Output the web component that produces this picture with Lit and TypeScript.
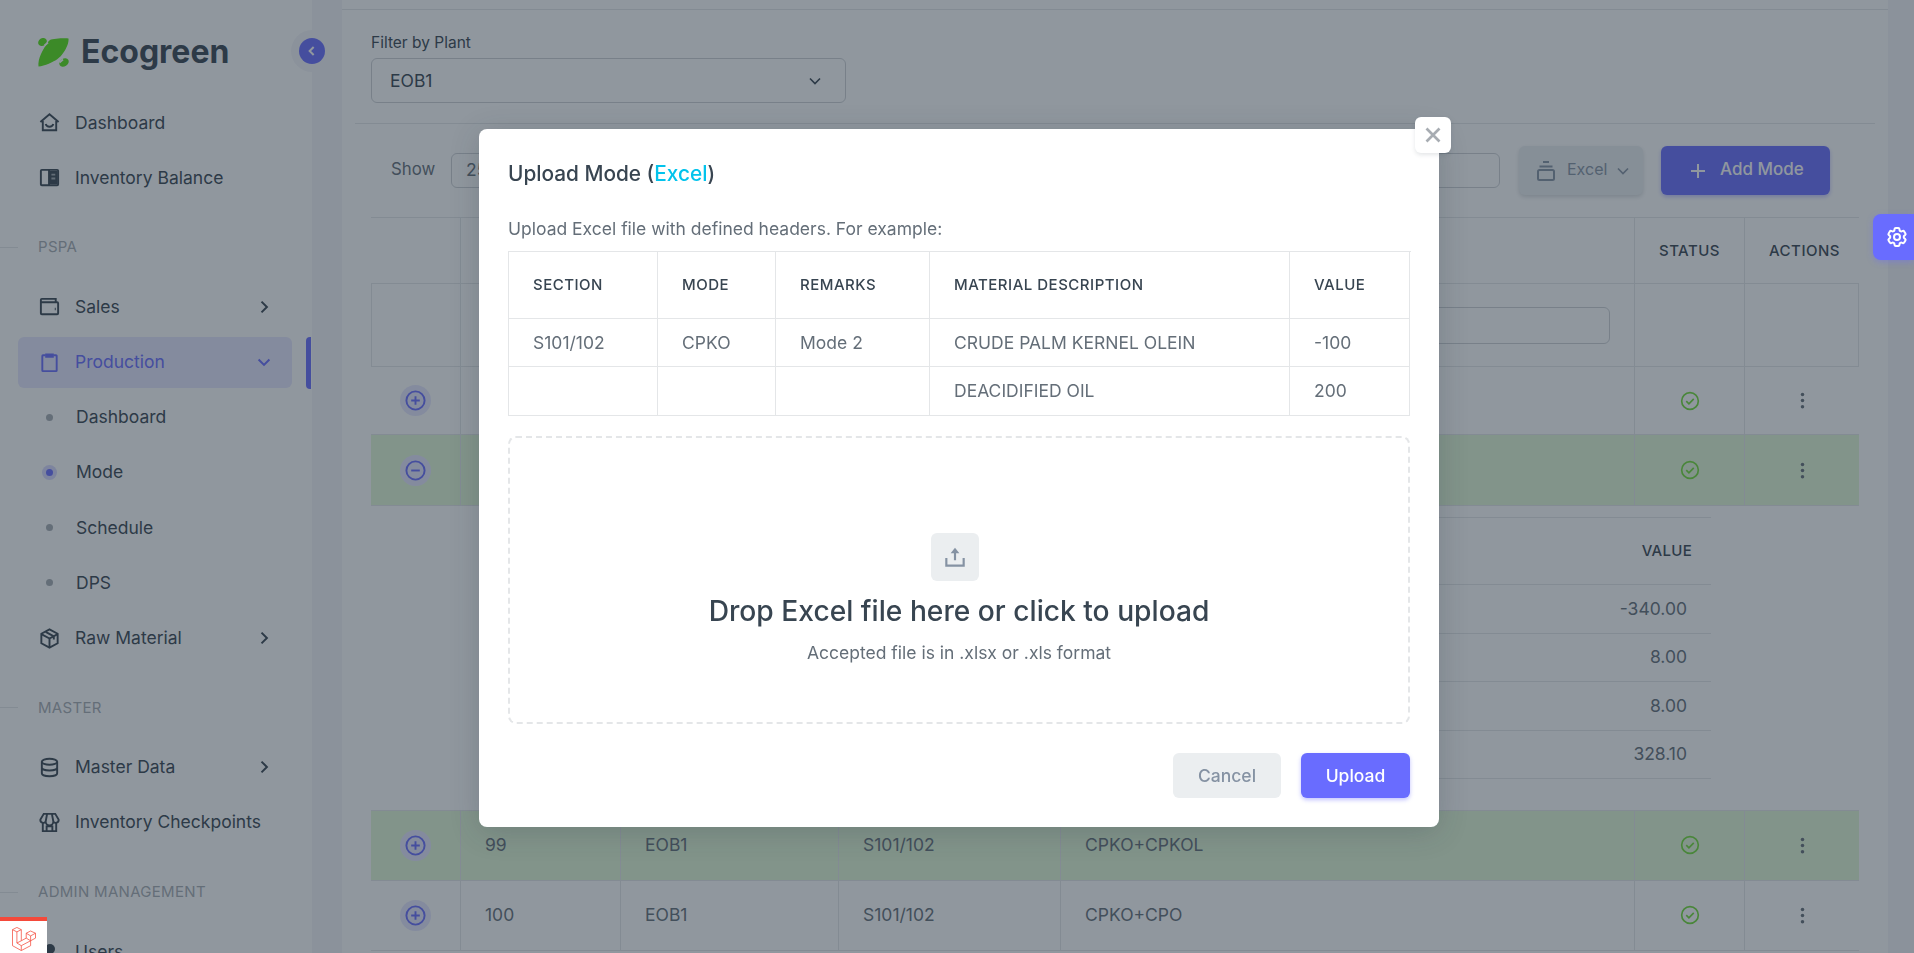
import { LitElement, html, css, svg, nothing } from 'lit';
import { customElement } from 'lit/decorators.js';

const ICONS: Record<string, unknown> = {
  home: svg`<path d="M5 10.5V20h14v-9.5M2.5 11.5 12 3.5l9.5 8M8 13.5a4.2 4.2 0 0 0 8 0"/>`,
  layout: svg`<rect x="3" y="4" width="18" height="16" rx="1"/><path d="M11.5 4v16" /><path d="M11.5 5h9v14h-9z" fill="currentColor" stroke="none"/><path d="M14 9h4M14 13h4" stroke="#fff" stroke-opacity=".55"/>`,
  wallet: svg`<path d="M3 7.5V19a1 1 0 0 0 1 1h16a1 1 0 0 0 1-1V8.5a1 1 0 0 0-1-1H3Zm0 0V5a1 1 0 0 1 1-1h14.5v3.5"/><path d="M17.5 14.5h1" stroke-width="2.6"/>`,
  clipboard: svg`<path d="M8 4.5H5.2a.7.7 0 0 0-.7.7v15.1c0 .4.3.7.7.7h13.6c.4 0 .7-.3.7-.7V5.2a.7.7 0 0 0-.7-.7H16"/><path d="M8.5 3.5h7v2.5h-7z" fill="currentColor"/>`,
  box: svg`<path d="M12 2.5 20.5 7v10L12 21.5 3.5 17V7L12 2.5Z"/><path d="M3.5 7.5 12 12l8.5-4.5M12 12v9.5M8 5l8.5 4.7v3.3"/>`,
  database: svg`<ellipse cx="12" cy="6" rx="8" ry="3.2"/><path d="M4 6v12c0 1.8 3.6 3.2 8 3.2s8-1.4 8-3.2V6M4 12c0 1.8 3.6 3.2 8 3.2s8-1.4 8-3.2"/>`,
  store: svg`<path d="M5 13v8h14v-8M9 21v-5h6v5M6 3h12l3.5 6a3 3 0 0 1-5.5 2 3.6 3.6 0 0 1-8 0 3 3 0 0 1-5.5-2L6 3ZM9.5 3 8 11M14.5 3l1.5 8"/>`,
};

const icon = (name: string) => html`<svg class="ico" viewBox="0 0 24 24">${ICONS[name]}</svg>`;

const chevronRight = html`<svg class="chev" viewBox="0 0 24 24"><path d="m9 5.5 6.5 6.5L9 18.5"/></svg>`;
const chevronDown = html`<svg class="chev" viewBox="0 0 24 24"><path d="m5.5 9 6.5 6.5L18.5 9"/></svg>`;
const selectChevron = html`<svg class="sel-chev" viewBox="0 0 24 24"><path d="m6 9 6 6 6-6"/></svg>`;

const plusBtn = html`<span class="round"><svg viewBox="0 0 24 24"><circle cx="12" cy="12" r="9.5"/><path d="M12 7.5v9M7.5 12h9"/></svg></span>`;
const minusBtn = html`<span class="round"><svg viewBox="0 0 24 24"><circle cx="12" cy="12" r="9.5"/><path d="M7.5 12h9"/></svg></span>`;
const check = html`<svg class="check" viewBox="0 0 24 24"><circle cx="12" cy="12" r="10"/><path d="m7.5 12.2 3.2 3.2 5.8-6"/></svg>`;
const dots = html`<svg class="dots" viewBox="0 0 24 24"><circle cx="12" cy="5" r="2"/><circle cx="12" cy="12" r="2"/><circle cx="12" cy="19" r="2"/></svg>`;

type NavItem =
  | { kind: 'head'; label: string }
  | { kind: 'link'; label: string; icon: string; arrow?: boolean; open?: boolean }
  | { kind: 'sub'; label: string; active?: boolean };

const NAV: NavItem[] = [
  { kind: 'link', label: 'Dashboard', icon: 'home' },
  { kind: 'link', label: 'Inventory Balance', icon: 'layout' },
  { kind: 'head', label: 'PSPA' },
  { kind: 'link', label: 'Sales', icon: 'wallet', arrow: true },
  { kind: 'link', label: 'Production', icon: 'clipboard', open: true },
  { kind: 'sub', label: 'Dashboard' },
  { kind: 'sub', label: 'Mode', active: true },
  { kind: 'sub', label: 'Schedule' },
  { kind: 'sub', label: 'DPS' },
  { kind: 'link', label: 'Raw Material', icon: 'box', arrow: true },
  { kind: 'head', label: 'MASTER' },
  { kind: 'link', label: 'Master Data', icon: 'database', arrow: true },
  { kind: 'link', label: 'Inventory Checkpoints', icon: 'store' },
  { kind: 'head', label: 'ADMIN MANAGEMENT' },
];

@customElement('app-root')
export class AppRoot extends LitElement {
  static styles = css`
    :host {
      display: flex;
      width: 1914px;
      height: 953px;
      overflow: hidden;
      background: #f5f5f9;
      color: #646e78;
      font-family: Inter, "Liberation Sans", sans-serif;
      font-size: 17.5px;
      line-height: 20px;
    }
    svg { display: block; }

    /* sidebar */
    .sidebar {
      position: relative;
      flex: 0 0 312px;
      background: #fff;
    }
    .brand {
      display: flex;
      align-items: center;
      gap: 12px;
      height: 97px;
      padding: 7px 0 0 38px;
      box-sizing: border-box;
      color: #384551;
      font-size: 32px;
      font-weight: 700;
    }
    .toggle {
      position: absolute;
      left: 291px;
      top: 30px;
      width: 42px;
      height: 42px;
      border-radius: 50%;
      background: #f5f5f9;
      clip-path: inset(0 21px 0 0);
    }
    .toggle-dot {
      position: absolute;
      left: 299px;
      top: 38px;
      width: 26px;
      height: 26px;
      border-radius: 50%;
      background: #696cff;
      display: flex;
      align-items: center;
      justify-content: center;
    }
    .toggle-dot svg { width: 16px; height: 16px; fill: none; stroke: #fff; stroke-width: 3; }
    .nav { display: flex; flex-direction: column; }
    .link {
      position: relative;
      display: flex;
      align-items: center;
      flex: none;
      height: 51px;
      margin: 0 20px 4.2px 18px;
      padding: 0 18px 0 20px;
      border-radius: 6px;
      color: #384551;
    }
    .link.open { background: #e7e7ff; color: #696cff; }
    .link.open::after {
      content: "";
      position: absolute;
      left: 288px;
      top: 0;
      width: 5px;
      height: 52px;
      background: #696cff;
      border-radius: 4px 0 0 4px;
    }
    .ico {
      flex: none;
      width: 23px;
      height: 23px;
      margin-right: 14px;
      fill: none;
      stroke: currentColor;
      stroke-width: 2;
    }
    .chev {
      width: 20px;
      height: 20px;
      margin-left: auto;
      fill: none;
      stroke: currentColor;
      stroke-width: 2.4;
    }
    .dot {
      flex: none;
      width: 7px;
      height: 7px;
      margin: 0 23px 0 8px;
      border-radius: 50%;
      background: #a7acb2;
    }
    .sub.active .dot {
      background: #696cff;
      box-shadow: 0 0 0 4px #d9d9ff;
    }
    .head {
      display: flex;
      align-items: center;
      flex: none;
      height: 20px;
      margin: 30px 0 24px;
      color: #a7acb2;
      font-size: 15px;
      letter-spacing: .3px;
    }
    .head::before {
      content: "";
      width: 18px;
      height: 1px;
      margin-right: 20px;
      background: #e4e6e8;
    }
    .user-dot {
      flex: none;
      width: 10px;
      height: 10px;
      margin: -6px 20px 0 7px;
      border-radius: 50%;
      background: #384551;
    }

    /* main */
    .main {
      flex: 0 0 1546px;
      margin-left: 30px;
      background: #fff;
      height: 953px;
      overflow: hidden;
    }
    .edge { height: 9px; border-bottom: 1px solid #e4e6e8; }
    .filter { padding: 23px 0 20px 29px; height: 70px; }
    .filter label { display: block; height: 25px; color: #384551; font-size: 15.5px; }
    .select {
      display: flex;
      align-items: center;
      justify-content: space-between;
      width: 475px;
      height: 45px;
      padding: 0 20px 0 18px;
      box-sizing: border-box;
      border: 1px solid #ced1d5;
      border-radius: 6px;
      color: #384551;
    }
    .sel-chev { width: 20px; height: 20px; fill: none; stroke: #384551; stroke-width: 2; }
    .rule { height: 1px; margin: 0 13px; background: #e4e6e8; }
    .toolbar {
      display: flex;
      align-items: center;
      height: 93px;
      padding-left: 49px;
      box-sizing: border-box;
    }
    .show { width: 60px; padding-bottom: 3px; font-size: 16.8px; }
    .mini {
      width: 120px;
      height: 35px;
      border: 1px solid #ced1d5;
      border-radius: 6px;
      box-sizing: border-box;
      padding: 6px 14px;
    }
    .search {
      width: 900px;
      height: 35px;
      margin-left: auto;
      border: 1px solid #ced1d5;
      border-radius: 6px;
      box-sizing: border-box;
    }
    .btn-excel {
      display: flex;
      align-items: center;
      width: 124px;
      height: 49px;
      margin-left: 19px;
      padding-left: 17px;
      box-sizing: border-box;
      border-radius: 6px;
      background: #ebeef0;
      box-shadow: 0 2px 4px rgba(34,48,62,.18);
      color: #8592a3;
      font-size: 16px;
    }
    .btn-excel .label, .btn-add .label { padding-bottom: 3px; }
    .btn-excel svg.stack { width: 20px; height: 22px; margin-right: 11px; fill: none; stroke: currentColor; stroke-width: 2; }
    .btn-excel .sel-chev { stroke: currentColor; margin-left: 6px; width: 20px; height: 20px; }
    .btn-add {
      display: flex;
      align-items: center;
      width: 169px;
      height: 49px;
      margin: 0 58px 0 18px;
      padding-left: 28px;
      box-sizing: border-box;
      border-radius: 6px;
      background: #696cff;
      box-shadow: 0 2px 4px rgba(105,108,255,.4);
      color: #fff;
      font-weight: 500;
      font-size: 17px;
    }
    .btn-add svg { width: 18px; height: 18px; margin-right: 13px; fill: none; stroke: currentColor; stroke-width: 2; }

    .table {
      display: grid;
      grid-template-columns: 90px 160px 218px 222px 574px 110px 114px;
      margin-left: 29px;
      width: 1488px;
    }
    .row { display: contents; }
    .cell {
      display: flex;
      align-items: center;
      padding-left: 24px;
      border-right: 1px solid #e4e6e8;
      border-bottom: 1px solid #e4e6e8;
      box-sizing: border-box;
    }
    .cell:last-child { border-right: 0; }
    .cell.c { justify-content: center; padding-left: 0; }
    .th {
      height: 67px;
      border-top: 1px solid #e4e6e8;
      color: #384551;
      font-size: 15px;
      font-weight: 500;
      letter-spacing: .5px;
    }
    .cell.c.th:last-child { padding-left: 5px; }
    .fl { height: 83px; }
    .fl.first { border-left: 1px solid #e4e6e8; }
    .fl:last-child { border-right: 1px solid #e4e6e8; }
    .fl .inp {
      width: 100%;
      height: 35px;
      margin-right: 24px;
      border: 1px solid #ced1d5;
      border-radius: 6px;
    }
    .tall { height: 68px; }
    .h70 { height: 70px; }
    .h71 { height: 71px; }
    .green { background: #e3f8d7; }
    .round {
      display: flex;
      align-items: center;
      justify-content: center;
      width: 31px;
      height: 31px;
      border-radius: 50%;
      background: #e7e7ff;
    }
    .round svg { width: 23px; height: 23px; fill: none; stroke: #696cff; stroke-width: 2; }
    .check { width: 20px; height: 20px; fill: none; stroke: #71dd37; stroke-width: 2; }
    .dots { width: 21px; height: 21px; fill: #646e78; }
    .detail {
      grid-column: 1 / -1;
      height: 304.5px;
      padding: 11px 0 0;
      box-sizing: border-box;
      border-bottom: 1px solid #e4e6e8;
    }
    .nested {
      width: 1111px;
      margin-left: 229px;
      border-top: 1px solid #e4e6e8;
    }
    .nested div {
      display: flex;
      align-items: center;
      justify-content: flex-end;
      height: 48.5px;
      padding-right: 24px;
      box-sizing: border-box;
      border-bottom: 1px solid #e4e6e8;
    }
    .nested .nh { height: 67px; padding-right: 19px; color: #384551; font-size: 15px; font-weight: 500; letter-spacing: .3px; }

    /* modal */
    .backdrop {
      position: fixed;
      inset: 0;
      background: rgba(34,48,62,.5);
    }
    .modal {
      position: absolute;
      left: 479px;
      top: 129px;
      width: 960px;
      height: 698px;
      padding: 31px 29px 0;
      box-sizing: border-box;
      background: #fff;
      border-radius: 8px;
      box-shadow: 0 5px 30px rgba(34,48,62,.2);
    }
    .close {
      position: absolute;
      right: -12px;
      top: -12px;
      width: 36px;
      height: 36px;
      display: flex;
      align-items: center;
      justify-content: center;
      background: #fff;
      border-radius: 6px;
      box-shadow: 0 2px 4px rgba(34,48,62,.12);
    }
    .close svg { width: 20px; height: 20px; fill: none; stroke: #a7acb2; stroke-width: 2.7; }
    .title {
      height: 28px;
      color: #384551;
      font-size: 20.8px;
      font-weight: 500;
      line-height: 28px;
    }
    .title span { color: #03c3ec; }
    .hint { margin-top: 31px; height: 32px; line-height: 20px; }
    .ex {
      display: grid;
      grid-template-columns: 149px 118px 154px 360px 120px;
      width: 902px;
      border-top: 1px solid #e4e6e8;
      border-left: 1px solid #e4e6e8;
    }
    .ex > div {
      display: flex;
      align-items: center;
      padding-left: 24px;
      height: 48px;
      border-right: 1px solid #e4e6e8;
      border-bottom: 1px solid #e4e6e8;
      box-sizing: border-box;
    }
    .ex > div.eh { height: 67px; color: #384551; font-size: 15px; font-weight: 500; letter-spacing: .5px; }
    .ex > div.last { height: 49px; }
    .drop {
      display: flex;
      flex-direction: column;
      align-items: center;
      width: 902px;
      height: 288px;
      margin-top: 20px;
      padding-top: 95px;
      box-sizing: border-box;
      border: 2px dashed #e4e6e8;
      border-radius: 8px;
    }
    .drop-ico {
      display: flex;
      align-items: center;
      justify-content: center;
      width: 48px;
      height: 48px;
      margin-right: 9px;
      border-radius: 6px;
      background: #ebeef0;
    }
    .drop-ico svg { width: 26px; height: 26px; fill: none; stroke: #8592a3; stroke-width: 2; }
    .drop h3 {
      margin: 13px 0 0;
      height: 34px;
      color: #384551;
      font-size: 28.2px;
      font-weight: 500;
      line-height: 34px;
    }
    .drop p { margin: 15px 0 0; }
    .actions {
      display: flex;
      justify-content: flex-end;
      gap: 20px;
      margin-top: 29px;
    }
    .actions button {
      height: 45px;
      padding: 0;
      border: 0;
      border-radius: 6px;
      font: inherit;
      font-weight: 500;
    }
    .cancel { width: 108px; background: #ebeef0; color: #8592a3; }
    .upload { width: 109px; background: #696cff; color: #fff; box-shadow: 0 2px 4px rgba(105,108,255,.4); }

    .gear {
      position: fixed;
      right: 0;
      top: 214px;
      width: 41px;
      height: 46px;
      display: flex;
      align-items: center;
      padding-left: 12px;
      box-sizing: border-box;
      background: #696cff;
      border-radius: 8px 0 0 8px;
      box-shadow: 0 2px 6px rgba(105,108,255,.4);
    }
    .gear svg { width: 24px; height: 24px; fill: none; stroke: #fff; stroke-width: 2; }
    .debug {
      position: fixed;
      left: 0;
      bottom: 0;
      width: 47px;
      height: 36px;
      box-sizing: border-box;
      display: flex;
      justify-content: center;
      padding-top: 6px;
      background: #fff;
      border-top: 4px solid #f4493a;
    }
    .debug svg { width: 24px; height: 24px; fill: none; stroke: #f4493a; stroke-width: 1.6; stroke-linejoin: round; }
  `;

  private renderNav(item: NavItem) {
    if (item.kind === 'head') return html`<div class="head">${item.label}</div>`;
    if (item.kind === 'sub') {
      return html`<div class="link sub ${item.active ? 'active' : ''}"><span class="dot"></span>${item.label}</div>`;
    }
    return html`<div class="link ${item.open ? 'open' : ''}">
      ${icon(item.icon)}${item.label}
      ${item.arrow ? chevronRight : item.open ? chevronDown : nothing}
    </div>`;
  }

  private renderRow(first: unknown, cols: string[], cls: string) {
    return html`<div class="row">
      <div class="cell c ${cls}">${first}</div>
      ${cols.map((c) => html`<div class="cell ${cls}">${c}</div>`)}
      <div class="cell c ${cls}">${check}</div>
      <div class="cell c ${cls}">${dots}</div>
    </div>`;
  }

  render() {
    return html`
      <aside class="sidebar">
        <div class="brand">
          <svg width="31" height="29" viewBox="0 0 31 29" fill="#56e412">
            <path d="M12 2C15 .5 27 0 30.5.5c.5 4-2 10-5 14-2 3-3.500 4.500-6 6.500-4 3-13 7-19 7.500C0 25 1 20 3 16c2-4 3-6 4.500-8 1-1.500 2.500-4.500 4.500-6Z"/>
            <ellipse cx="4.500" cy="4" rx="4.500" ry="3.800" transform="rotate(-32 4.500 4)"/>
            <ellipse cx="26" cy="24.500" rx="5" ry="3.800" transform="rotate(-32 26 24.500)"/>
            <path d="M6.500 7.500 10 4.500M21.500 24.500l3.500-3" stroke="#fff" stroke-width="1.800" fill="none"/>
          </svg>
          Ecogreen
        </div>
        <span class="toggle"></span>
        <span class="toggle-dot"><svg viewBox="0 0 24 24"><path d="m14.5 6-6 6 6 6"/></svg></span>
        <nav class="nav">
          ${NAV.map((item) => this.renderNav(item))}
          <div class="link users"><span class="user-dot"></span>Users</div>
        </nav>
      </aside>

      <main class="main">
        <div class="edge"></div>
        <div class="filter">
          <label>Filter by Plant</label>
          <div class="select">EOB1 ${selectChevron}</div>
        </div>
        <div class="rule"></div>
        <div class="toolbar">
          <span class="show">Show</span>
          <span class="mini">25</span>
          <span class="search"></span>
          <span class="btn-excel">
            <svg class="stack" viewBox="0 0 20 22"><path d="M7 2h6M3.5 6.5h13"/><rect x="2" y="10" width="16" height="10" rx="1.5"/></svg>
            <span class="label">Excel</span> ${selectChevron}
          </span>
          <span class="btn-add">
            <svg viewBox="0 0 18 18"><path d="M9 2v14M2 9h14"/></svg><span class="label">Add Mode</span>
          </span>
        </div>

        <div class="table">
          <div class="row">
            <div class="cell th"></div><div class="cell th"></div><div class="cell th"></div>
            <div class="cell th"></div><div class="cell th"></div>
            <div class="cell c th">STATUS</div><div class="cell c th">ACTIONS</div>
          </div>
          <div class="row">
            <div class="cell fl first"></div><div class="cell fl"></div><div class="cell fl"></div>
            <div class="cell fl"></div><div class="cell fl"><span class="inp"></span></div>
            <div class="cell fl"></div><div class="cell fl"></div>
          </div>
          ${this.renderRow(plusBtn, ['', '', '', ''], 'tall')}
          ${this.renderRow(minusBtn, ['', '', '', ''], 'h71 green')}
          <div class="detail">
            <div class="nested">
              <div class="nh">VALUE</div>
              <div>-340.00</div>
              <div>8.00</div>
              <div>8.00</div>
              <div>328.10</div>
            </div>
          </div>
          ${this.renderRow(plusBtn, ['99', 'EOB1', 'S101/102', 'CPKO+CPKOL'], 'h70 green')}
          ${this.renderRow(plusBtn, ['100', 'EOB1', 'S101/102', 'CPKO+CPO'], 'h70')}
        </div>
      </main>

      <div class="backdrop">
        <section class="modal">
          <span class="close"><svg viewBox="0 0 20 20"><path d="m3.5 3.5 13 13M16.5 3.5l-13 13"/></svg></span>
          <div class="title">Upload Mode (<span>Excel</span>)</div>
          <div class="hint">Upload Excel file with defined headers. For example:</div>
          <div class="ex">
            <div class="eh">SECTION</div><div class="eh">MODE</div><div class="eh">REMARKS</div>
            <div class="eh">MATERIAL DESCRIPTION</div><div class="eh">VALUE</div>
            <div>S101/102</div><div>CPKO</div><div>Mode 2</div><div>CRUDE PALM KERNEL OLEIN</div><div>-100</div>
            <div class="last"></div><div class="last"></div><div class="last"></div><div class="last">DEACIDIFIED OIL</div><div class="last">200</div>
          </div>
          <div class="drop">
            <span class="drop-ico"><svg viewBox="0 0 24 24"><path d="M4 13v7h16v-7M12 15V5"/><path d="m12 3.5 4 5H8z" fill="#8592a3" stroke="none"/></svg></span>
            <h3>Drop Excel file here or click to upload</h3>
            <p>Accepted file is in .xlsx or .xls format</p>
          </div>
          <div class="actions">
            <button class="cancel">Cancel</button>
            <button class="upload">Upload</button>
          </div>
        </section>
      </div>

      <span class="gear"><svg viewBox="0 0 24 24"><path d="M9.594 3.94c.09-.542.56-.94 1.11-.94h2.593c.55 0 1.02.398 1.11.94l.213 1.281c.063.374.313.686.645.87.074.04.147.083.22.127.325.196.72.257 1.075.124l1.217-.456a1.125 1.125 0 0 1 1.37.49l1.296 2.247a1.125 1.125 0 0 1-.26 1.431l-1.003.827c-.293.241-.438.613-.43.992a7.723 7.723 0 0 1 0 .255c-.008.378.137.75.43.991l1.004.827c.424.35.534.955.26 1.43l-1.298 2.247a1.125 1.125 0 0 1-1.369.491l-1.217-.456c-.355-.133-.75-.072-1.076.124a6.47 6.47 0 0 1-.22.128c-.331.183-.581.495-.644.869l-.213 1.281c-.09.543-.56.94-1.11.94h-2.594c-.55 0-1.019-.398-1.11-.94l-.213-1.281c-.062-.374-.312-.686-.644-.87a6.52 6.52 0 0 1-.22-.127c-.325-.196-.72-.257-1.076-.124l-1.217.456a1.125 1.125 0 0 1-1.369-.49l-1.297-2.247a1.125 1.125 0 0 1 .26-1.431l1.004-.827c.292-.24.437-.613.43-.991a6.932 6.932 0 0 1 0-.255c.007-.38-.138-.751-.43-.992l-1.004-.827a1.125 1.125 0 0 1-.26-1.43l1.297-2.247a1.125 1.125 0 0 1 1.37-.491l1.216.456c.356.133.751.072 1.076-.124.072-.044.146-.086.22-.128.332-.183.582-.495.644-.869l.214-1.28Z"/><circle cx="12" cy="12" r="3"/></svg></span>
      <span class="debug"><svg viewBox="0 2 49 54" preserveAspectRatio="none"><path d="M1 8 10 3l9 5v25l10-6V16l9-5 10 5v11l-10 6v11L19 55 1 44V8ZM1 8l9 5 9-5M10 13v25l9 6v11M10 38l9-5M19 44l19-11M29 16l9 6 10-6M38 22v11M29 27l9 6"/></svg></span>
    `;
  }
}
